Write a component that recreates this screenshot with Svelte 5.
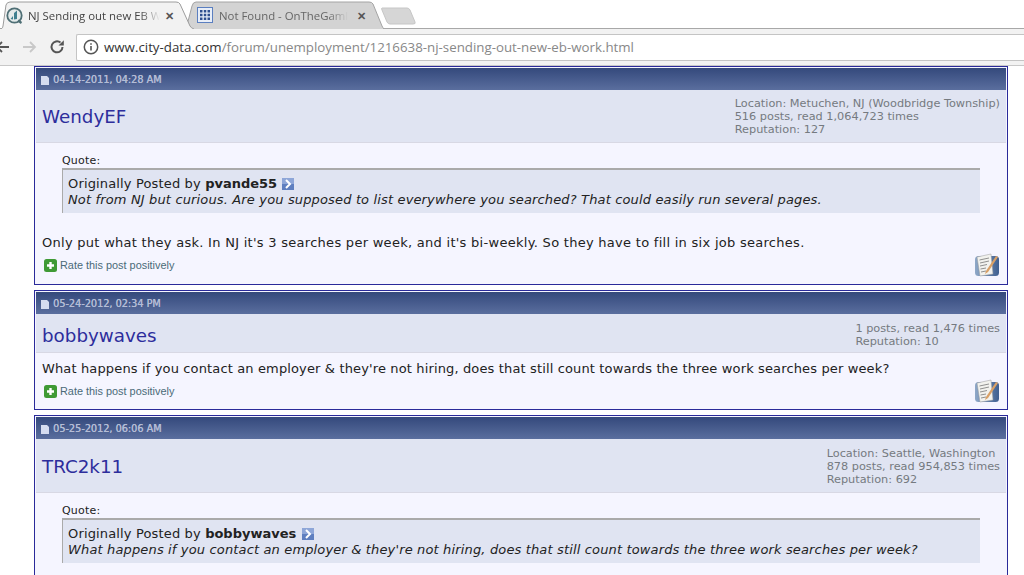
<script>
  const posts = [
    { date: '04-14-2011, 04:28 AM', user: 'WendyEF', info: ['Location: Metuchen, NJ (Woodbridge Township)', '516 posts, read 1,064,723 times', 'Reputation: 127'],
      quoteBy: 'pvande55', quote: 'Not from NJ but curious. Are you supposed to list everywhere you searched? That could easily run several pages.',
      text: "Only put what they ask. In NJ it's 3 searches per week, and it's bi-weekly. So they have to fill in six job searches.", wide: true, rate: true },
    { date: '05-24-2012, 02:34 PM', user: 'bobbywaves', info: ['1 posts, read 1,476 times', 'Reputation: 10'],
      text: "What happens if you contact an employer & they're not hiring, does that still count towards the three work searches per week?", rate: true },
    { date: '05-25-2012, 06:06 AM', user: 'TRC2k11', info: ['Location: Seattle, Washington', '878 posts, read 954,853 times', 'Reputation: 692'],
      quoteBy: 'bobbywaves', quote: "What happens if you contact an employer & they're not hiring, does that still count towards the three work searches per week?" }
  ];
</script>

<div class="page">
  <div class="tabstrip">
    <div class="tab active">
      <svg class="tabshape" viewBox="0 0 194 28"><path d="M0 28 L1 28 Q3 27 3 25 L6 4 Q7 1 10 1 L176 1 Q179 1 180 3 L190 25 Q191 27 194 28" fill="#f2f2f2" stroke="#9c9c9c"/></svg>
      <svg class="fav" viewBox="0 0 17 17"><circle cx="8.500" cy="8.500" r="7.200" fill="#e4ebeb" stroke="#4f6f75" stroke-width="1.800"/><path d="M4.500 12 L7 9 V12.500 Z M8 12.500 V6 L11 3.500 V12Z" fill="#3f8090"/><path d="M12 13.500 L15.500 16" stroke="#4f6f75" stroke-width="2.200"/></svg>
      <span class="tabtitle">NJ Sending out new EB W</span>
      <span class="close">✕</span>
    </div>
    <div class="tab inactive">
      <svg class="tabshape" viewBox="0 0 198 28"><path d="M0 28 L6 5 Q7 1 10 1 L183 1 Q186 1 187 3 L196 25 Q197 27 198 28" fill="#d3d3d3" stroke="#a4a4a4"/></svg>
      <svg class="fav two" viewBox="0 0 16 16"><rect x="0.500" y="0.500" width="15" height="15" fill="#e8eef8" stroke="#5b7fc0"/><path d="M3 3h2.500v2.500H3zM6.800 3h2.500v2.500H6.800zM10.500 3H13v2.500h-2.500zM3 6.800h2.500v2.500H3zM6.800 6.800h2.500v2.500H6.800zM10.500 6.800H13v2.500h-2.500zM3 10.500h2.500V13H3zM6.800 10.500h2.500V13H6.800zM10.500 10.500H13V13h-2.500z" fill="#2f4f8f"/></svg>
      <span class="tabtitle dim">Not Found - OnTheGaml</span>
      <span class="close">✕</span>
    </div>
    <svg class="newtab" viewBox="0 0 36 18"><path d="M1 1 H26 Q28 1 29 3 L34 15 Q35 17 32 17 H9 Q7 17 6 15 L1 3 Q0 1 1 1Z" fill="#d6d6d6" stroke="#c6c6c6"/></svg>
  </div>

  <div class="toolbar">
    <svg class="nav back" viewBox="0 0 16 16"><path d="M15 8H3M8 3 L3 8 L8 13" fill="none" stroke="#555" stroke-width="1.800"/></svg>
    <svg class="nav fwd" viewBox="0 0 16 16"><path d="M1 8H13M8 3 L13 8 L8 13" fill="none" stroke="#c8c8c8" stroke-width="1.800"/></svg>
    <svg class="nav reload" viewBox="0 0 16 16"><path d="M13.500 8 A5.500 5.500 0 1 1 11.500 3.600" fill="none" stroke="#555" stroke-width="2"/><path d="M9.500 6.500 H14.800 V1.200Z" fill="#555"/></svg>
    <div class="omnibox">
      <svg class="info" viewBox="0 0 16 16"><circle cx="8" cy="8" r="6.700" fill="none" stroke="#555" stroke-width="1.500"/><path d="M8 7v4.500M8 4.300v1.500" stroke="#555" stroke-width="1.600"/></svg>
      <span class="url"><span class="host">www.city-data.com</span>/forum/unemployment/1216638-nj-sending-out-new-eb-work.html</span>
    </div>
  </div>

  <main class="posts">
    {#each posts as p}
      <article class="post">
        <header class="phead">
          <svg class="doc" viewBox="0 0 10 10"><path d="M1 1 H7 L9 3 V10 H1Z" fill="#d5dcf0"/></svg>
          <span>{p.date}</span>
        </header>
        <div class="userbar" class:compact={!p.quote}>
          <a class="user">{p.user}</a>
          <div class="uinfo">
            {#each p.info as line}<div>{line}</div>{/each}
          </div>
        </div>
        <div class="pbody">
          {#if p.quote}
            <div class="quotewrap">
              <div class="qlabel">Quote:</div>
              <div class="qbox">
                <div>Originally Posted by <b>{p.quoteBy}</b> <svg class="goto" viewBox="0 0 12 12"><rect width="12" height="12" fill="#5f7fc0"/><rect width="12" height="6" fill="#8ea6d8"/><path d="M4 2 L8 6 L4 10" fill="none" stroke="#fff" stroke-width="2"/></svg></div>
                <div><i>{p.quote}</i></div>
              </div>
            </div>
          {/if}
          {#if p.text}<div class="ptext" class:wide={p.wide}>{p.text}</div>{/if}
          {#if p.rate}
            <div class="pfoot" class:wide={p.wide}>
              <div class="rate">
                <svg class="plus" viewBox="0 0 13 13"><rect width="13" height="13" rx="2.500" fill="#3f9a35"/><path d="M6.500 3v7M3 6.500h7" stroke="#fff" stroke-width="2.400"/></svg>
                <span>Rate this post positively</span>
              </div>
              <svg class="edit" viewBox="0 0 26 24">
                <defs><linearGradient id="editbg" x1="0" x2="1" y1="0" y2="0"><stop offset="0" stop-color="#8fa8c8"/><stop offset="1" stop-color="#3f5f90"/></linearGradient></defs>
                <rect x="1" y="3" width="24" height="20" rx="3.500" fill="url(#editbg)"/>
                <path d="M3 4 L17 1 L19 21 L6 23Z" fill="#f2f2ee" stroke="#9a9a9a" stroke-width=".5"/>
                <path d="M5.500 7 L15 5M6 10 L15 8M6 13 L13 11.500M6.500 16 L12 15M7 19 L12 18" stroke="#777" stroke-width=".8"/>
                <path d="M12 18 L22 3 L24 4 L14 19 L11 21Z" fill="#d9a066"/>
              </svg>
            </div>
          {/if}
        </div>
      </article>
    {/each}
  </main>
</div>

<style>
  :global(body) { margin: 0; background: #fff; overflow: hidden; }
  .page { width: 1024px; height: 575px; overflow: hidden; font-family: "DejaVu Sans", Verdana, sans-serif; }
  .tabstrip { height: 29px; display: flex; align-items: flex-end; background: #fff; border-bottom: 1px solid #a8a8a8; box-sizing: border-box; }
  .tab { position: relative; height: 28px; margin-bottom: -1px; display: flex; align-items: center; box-sizing: border-box; flex: none; font-family: "Open Sans", Arial, sans-serif; font-size: 11.400px; color: #444; }
  .tab.active { z-index: 2; width: 194px; padding-left: 6px; }
  .tab.inactive { margin-left: -8px; padding-left: 11px; width: 198px; }
  .tabshape { position: absolute; inset: 0; width: 100%; height: 100%; }
  .fav { position: relative; width: 17px; height: 17px; flex: none; }
  .fav.two { width: 16px; height: 16px; }
  .tabtitle { position: relative; margin-left: 5px; width: 132px; white-space: nowrap; overflow: hidden; -webkit-mask-image: linear-gradient(90deg, #000 85%, transparent); mask-image: linear-gradient(90deg, #000 85%, transparent); }
  .tab.inactive .tabtitle { margin-left: 6px; width: 129px; }
  .dim { color: #666; }
  .close { position: relative; font-size: 11px; color: #555; font-weight: bold; margin-left: 5px; }
  .tab.inactive .close { margin-left: 9px; }
  .newtab { width: 36px; height: 18px; flex: none; margin: 0 0 3px -3px; }
  .toolbar { height: 37px; display: flex; align-items: center; background: #f2f2f2; border-bottom: 1px solid #c8c8c8; box-sizing: border-box; }
  .nav { width: 16px; height: 16px; flex: none; }
  .nav.back { margin-left: -6px; }
  .nav.fwd { margin-left: 12px; }
  .nav.reload { margin-left: 11px; }
  .omnibox { flex: 1; height: 27px; margin-left: 11px; background: #fff; border: 1px solid #c4c4c4; border-right: none; border-radius: 2px 0 0 2px; display: flex; align-items: center; box-sizing: border-box; }
  .info { width: 16px; height: 16px; margin-left: 6px; flex: none; }
  .url { margin-left: 5px; font-family: "Open Sans", Arial, sans-serif; font-size: 13.300px; color: #888; white-space: nowrap; }
  .host { color: #333; }
  .posts { width: 974px; margin-left: 34px; display: flex; flex-direction: column; gap: 5px; }
  .post { border: 1px solid #2a2a9a; background: #f5f5ff; box-sizing: border-box; }
  .post:last-child .userbar { padding-top: 8px; }
  .phead { height: 22px; margin: 1px 1px 0; display: flex; align-items: center; gap: 3px; padding-left: 4px; box-sizing: border-box; background: linear-gradient(#34497c, #5a6e9e); color: #b4bdd6; font-size: 9.700px; font-weight: normal; text-shadow: .3px 0 0 #b4bdd6; }
  .doc { width: 10px; height: 10px; margin-top: 2px; }
  .userbar { display: flex; justify-content: space-between; align-items: center; margin: 0 1px; background: #e0e4f2; border-bottom: 1px solid #d8d8e4; padding: 7px 6px 6px 6px; }
  .userbar.compact { padding: 8px 6px 4px 6px; }
  .user { color: #2d2d9c; font-size: 18.300px; }
  .uinfo { font-size: 11.300px; line-height: 13px; color: #757a80; }
  .pbody { padding: 8px 7px 0 7px; font-size: 13px; color: #222; }
  .quotewrap { margin: 3px 20px 22px 20px; }
  .qlabel { font-size: 11px; letter-spacing: .2px; line-height: 13px; margin-bottom: 1px; color: #222; }
  .qbox { background: #e0e4f2; border-top: 2px solid #aaa; border-left: 1px solid #aaa; padding: 6px 6px 5px 5px; line-height: 16px; letter-spacing: .15px; color: #222; }
  .qbox b { letter-spacing: 0; }
  .goto { width: 12px; height: 12px; vertical-align: -2px; margin-left: 1px; }
  .ptext { line-height: 16px; letter-spacing: .14px; }
  .ptext.wide { letter-spacing: .28px; }
  .pfoot { display: flex; justify-content: space-between; align-items: center; margin-top: 2px; padding-bottom: 6px; }
  .pfoot.wide { padding-bottom: 7px; }
  .rate { display: flex; align-items: center; gap: 3px; padding-left: 2px; font-family: "Liberation Sans", Arial, sans-serif; font-size: 10.900px; color: #4a6a78; }
  .plus { width: 13px; height: 13px; }
  .edit { width: 26px; height: 24px; margin-right: 0; }
</style>
